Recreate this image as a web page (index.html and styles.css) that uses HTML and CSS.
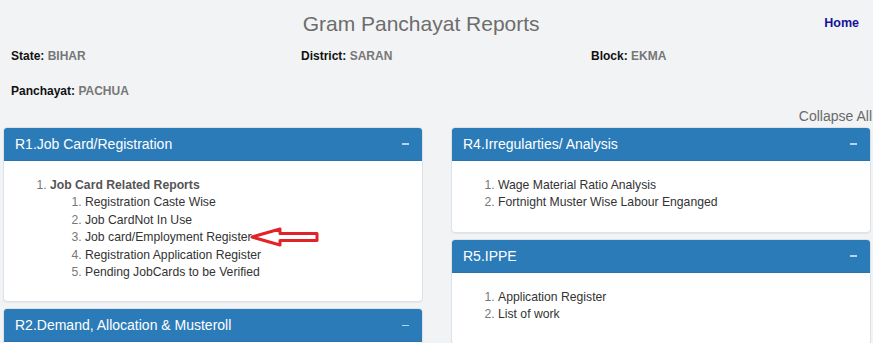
FILE: index.html
```html
<!DOCTYPE html>
<html lang="en">
<head>
<meta charset="utf-8">
<title>Gram Panchayat Reports</title>
<link rel="stylesheet" href="styles.css">
</head>
<body>
<div class="page">
  <header class="top">
    <h1 class="title">Gram Panchayat Reports</h1>
    <a class="home" href="#">Home</a>
  </header>
  <div class="info">
    <div class="field"><b>State:</b> <span class="val">BIHAR</span></div>
    <div class="field"><b>District:</b> <span class="val">SARAN</span></div>
    <div class="field"><b>Block:</b> <span class="val">EKMA</span></div>
    <div class="field"><b>Panchayat:</b> <span class="val">PACHUA</span></div>
  </div>
  <div class="collapse-row"><a class="collapse" href="#">Collapse All</a></div>
  <div class="columns">
    <div class="col">
      <section class="panel">
        <div class="panel-head"><span>R1.Job Card/Registration</span><i class="minus"></i></div>
        <div class="panel-body">
          <ol class="list">
            <li><span class="group">Job Card Related Reports</span>
              <ol class="list sub">
                <li><span class="item">Registration Caste Wise</span></li>
                <li><span class="item">Job CardNot In Use</span></li>
                <li><span class="item">Job card/Employment Register</span><svg class="arrow" width="70" height="20" viewBox="0 0 70 20"><path d="M2 10 L30 2 L30 6.5 L67 6.5 L67 13.5 L30 13.5 L30 18 Z" fill="#fff" stroke="#e0242a" stroke-width="3" stroke-linejoin="round"/></svg></li>
                <li><span class="item">Registration Application Register</span></li>
                <li><span class="item">Pending JobCards to be Verified</span></li>
              </ol>
            </li>
          </ol>
        </div>
      </section>
      <section class="panel">
        <div class="panel-head"><span>R2.Demand, Allocation &amp; Musteroll</span><i class="minus"></i></div>
        <div class="panel-body short"></div>
      </section>
    </div>
    <div class="col">
      <section class="panel">
        <div class="panel-head"><span>R4.Irregularties/ Analysis</span><i class="minus"></i></div>
        <div class="panel-body">
          <ol class="list">
            <li><span class="item">Wage Material Ratio Analysis</span></li>
            <li><span class="item">Fortnight Muster Wise Labour Enganged</span></li>
          </ol>
        </div>
      </section>
      <section class="panel">
        <div class="panel-head"><span>R5.IPPE</span><i class="minus"></i></div>
        <div class="panel-body">
          <ol class="list">
            <li><span class="item">Application Register</span></li>
            <li><span class="item">List of work</span></li>
          </ol>
        </div>
      </section>
    </div>
  </div>
</div>
</body>
</html>
```
FILE: styles.css
```css
* { box-sizing: border-box; }
html, body { margin: 0; padding: 0; }
body {
  background: #f2f3f5;
  font-family: "Liberation Sans", Arial, sans-serif;
  color: #333;
  overflow: hidden;
  height: 343px;
}
.page { padding: 0 2px 0 3px; }
.top {
  display: flex;
  align-items: center;
  height: 48px;
  padding: 0 12px 0 15px;
}
.title {
  flex: 1;
  margin: 0;
  text-align: center;
  font-weight: normal;
  font-size: 21px;
  color: #6d6d6d;
}
.home {
  font-size: 12.5px;
  font-weight: bold;
  color: #14149a;
  text-decoration: none;
  margin-top: -2px;
}
.info {
  display: grid;
  grid-template-columns: repeat(3, 290px);
  grid-auto-rows: 35px;
  padding-left: 8px;
  align-items: center;
  margin-top: -10px;
}
.field { font-size: 12px; color: #111; }
.field .val { color: #777; font-weight: bold; }
.collapse-row {
  display: flex;
  justify-content: flex-end;
  height: 26px;
  align-items: center;
  margin-top: -5px;
}
.collapse { font-size: 14px; color: #6a6a6a; text-decoration: none; margin-right: -1px; }
.columns {
  display: grid;
  grid-template-columns: 420px 420px;
  column-gap: 28px;
  margin-top: -2px;
}
.col { display: flex; flex-direction: column; gap: 6px; }
.panel {
  background: #fff;
  border: 1px solid #dde2e8;
  border-radius: 4px;
  box-shadow: 0 1px 1px rgba(0,0,0,0.05);
  overflow: hidden;
}
.panel-head {
  background: #2b7bb9;
  border-bottom: 1px solid #2a72ab;
  height: 33px;
  display: flex;
  align-items: center;
  justify-content: space-between;
  padding: 0 13px 0 11px;
  color: #fff;
  font-size: 14px;
}
.minus {
  display: block;
  width: 7px;
  height: 1.5px;
  background: #b9d3ea;
}
.panel-body { padding: 16px 15px 10px; }
.panel-body.short { height: 20px; }
.list {
  margin: 0 0 10px;
  padding-left: 31px;
  font-size: 12.2px;
  line-height: 17.4px;
  color: #777;
}
.list.sub { padding-left: 35px; margin: 0; }
.list li::marker { color: #777; }
.group { font-weight: bold; color: #555; }
.item { color: #333; }
.arrow { vertical-align: middle; margin-left: -2px; margin-top: -3px; }
```
